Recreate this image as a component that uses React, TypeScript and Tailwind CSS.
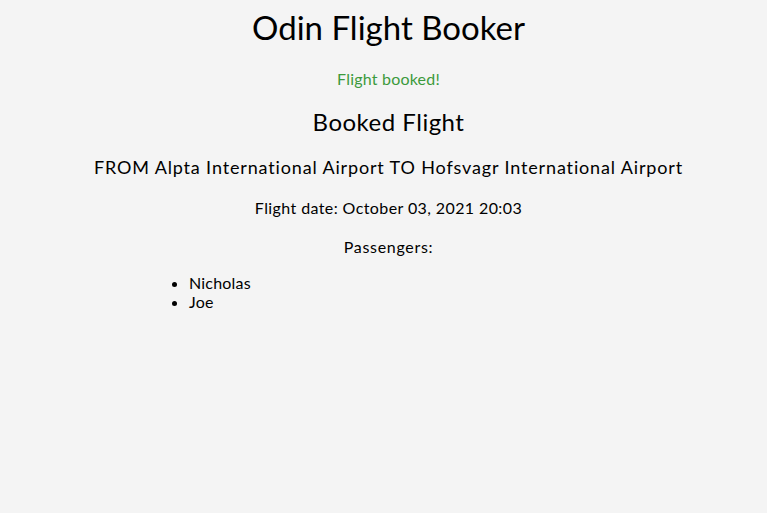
export default function App() {
  return (
    <div
      className="min-h-screen bg-[#f4f4f4] text-black flex flex-col items-center pl-[10px]"
      style={{ fontFamily: '"Lato", "Noto Sans", sans-serif' }}
    >
      <h1 className="text-[33px] leading-none mt-[11px]">Odin Flight Booker</h1>
      <p className="text-[16px] text-[#3c9a3c] mt-[23px] tracking-[0.2px]">Flight booked!</p>
      <h2 className="text-[24px] mt-[13px] tracking-[0.5px]">Booked Flight</h2>
      <p className="text-[18px] mt-[14px] tracking-[0.85px]">
        FROM Alpta International Airport TO Hofsvagr International Airport
      </p>
      <p className="text-[16px] mt-[15px] tracking-[0.4px]">Flight date: October 03, 2021 20:03</p>
      <p className="text-[16px] mt-[15px] tracking-[0.7px]">Passengers:</p>
      <ul className="self-start ml-[139px] mt-[14px] list-disc pl-10 text-[16px] leading-[19px] tracking-[0.2px]">
        <li>Nicholas</li>
        <li>Joe</li>
      </ul>
    </div>
  );
}
